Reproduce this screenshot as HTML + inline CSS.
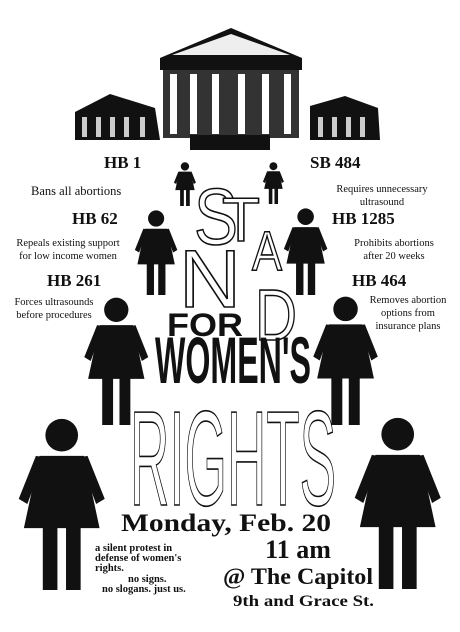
<!DOCTYPE html>
<html><head><meta charset="utf-8"><style>
html,body{margin:0;padding:0;background:#fff}
svg{display:block}
.b{font-family:"Liberation Serif",serif;font-weight:bold;fill:#111}
.d{font-family:"Liberation Serif",serif;fill:#111}
.o{font-family:"Liberation Sans",sans-serif;fill:#fff;stroke:#111;stroke-width:1.6}
.k{font-family:"Liberation Sans",sans-serif;font-weight:bold;fill:#111}
</style></head><body>
<svg width="460" height="632" viewBox="0 0 460 632" xmlns="http://www.w3.org/2000/svg">
<defs>
<g id="w">
<circle cx="26" cy="10" r="9.5" fill="#111"/>
<polygon points="13,22 39,22 48,64 4,64" fill="#111"/>
<polygon points="11,22 16,23 6,50 1,47" fill="#111"/>
<polygon points="41,22 36,23 46,50 51,47" fill="#111"/>
<rect x="15" y="62" width="8.5" height="38" fill="#111"/>
<rect x="28.5" y="62" width="8.5" height="38" fill="#111"/>
</g>
</defs>
<!-- capitol -->
<g fill="#111">
<polygon points="160,58 231,28 302,58"/>
<polygon points="172,55 231,34 290,55" fill="#eee"/>
<rect x="160" y="58" width="142" height="12"/>
<rect x="163" y="70" width="136" height="68" fill="#333"/>
<g fill="#fff"><rect x="170" y="74" width="7" height="60"/><rect x="190" y="74" width="7" height="60"/><rect x="212" y="74" width="7" height="60"/><rect x="238" y="74" width="7" height="60"/><rect x="262" y="74" width="7" height="60"/><rect x="284" y="74" width="7" height="60"/></g>
<rect x="190" y="135" width="80" height="15"/>
<polygon points="75,112 110,94 155,108 160,140 75,140"/>
<g fill="#ccc"><rect x="82" y="117" width="5" height="20"/><rect x="96" y="117" width="5" height="20"/><rect x="110" y="117" width="5" height="20"/><rect x="124" y="117" width="5" height="20"/><rect x="140" y="117" width="5" height="20"/></g>
<polygon points="310,106 345,96 378,108 380,140 310,140"/>
<g fill="#ccc"><rect x="318" y="117" width="5" height="20"/><rect x="332" y="117" width="5" height="20"/><rect x="346" y="117" width="5" height="20"/><rect x="360" y="117" width="5" height="20"/></g>
</g>
<!-- figures -->
<use href="#w" transform="translate(173.5,162) scale(0.44)"/>
<use href="#w" transform="translate(262.5,162) scale(0.42)"/>
<use href="#w" transform="translate(134,210) scale(0.85)"/>
<use href="#w" transform="translate(283,208) scale(0.87)"/>
<use href="#w" transform="translate(83,297) scale(1.28)"/>
<use href="#w" transform="translate(312,296) scale(1.29)"/>
<use href="#w" transform="translate(17,418) scale(1.72)"/>
<use href="#w" transform="translate(353,417) scale(1.72)"/>
<!-- bills -->
<text class="b" x="104" y="168" font-size="17">HB 1</text>
<text class="d" x="31" y="195" font-size="12.5">Bans all abortions</text>
<text class="b" x="310" y="168" font-size="17">SB 484</text>
<text class="d" x="382" y="192" font-size="10.5" text-anchor="middle">Requires unnecessary</text>
<text class="d" x="382" y="205" font-size="10.5" text-anchor="middle">ultrasound</text>
<text class="b" x="72" y="224" font-size="17">HB 62</text>
<text class="d" x="68" y="246" font-size="10.5" text-anchor="middle">Repeals existing support</text>
<text class="d" x="68" y="259" font-size="10.5" text-anchor="middle">for low income women</text>
<text class="b" x="332" y="224" font-size="17">HB 1285</text>
<text class="d" x="394" y="246" font-size="10.5" text-anchor="middle">Prohibits abortions</text>
<text class="d" x="394" y="259" font-size="10.5" text-anchor="middle">after 20 weeks</text>
<text class="b" x="47" y="286" font-size="17">HB 261</text>
<text class="d" x="54" y="305" font-size="10.5" text-anchor="middle">Forces ultrasounds</text>
<text class="d" x="54" y="318" font-size="10.5" text-anchor="middle">before procedures</text>
<text class="b" x="352" y="286" font-size="17">HB 464</text>
<text class="d" x="408" y="303" font-size="10.5" text-anchor="middle">Removes abortion</text>
<text class="d" x="408" y="316" font-size="10.5" text-anchor="middle">options from</text>
<text class="d" x="408" y="329" font-size="10.5" text-anchor="middle">insurance plans</text>
<!-- STAND -->
<text class="o" x="194" y="244" font-size="80" textLength="44" lengthAdjust="spacingAndGlyphs">S</text>
<text class="o" x="222" y="241" font-size="62" textLength="38" lengthAdjust="spacingAndGlyphs">T</text>
<text class="o" x="252" y="270" font-size="56" textLength="30" lengthAdjust="spacingAndGlyphs">A</text>
<text class="o" x="179" y="307" font-size="82" textLength="62" lengthAdjust="spacingAndGlyphs">N</text>
<text class="o" x="255" y="340" font-size="72" textLength="42" lengthAdjust="spacingAndGlyphs">D</text>
<text class="k" x="167" y="336" font-size="32" textLength="76" lengthAdjust="spacingAndGlyphs">FOR</text>
<text class="k" x="155" y="383" font-size="66" textLength="156" lengthAdjust="spacingAndGlyphs">WOMEN'S</text>
<text class="o" x="130" y="505" font-size="135" textLength="206" lengthAdjust="spacingAndGlyphs" style="font-weight:normal">RIGHTS</text>
<!-- bottom -->
<text class="b" x="121" y="531" font-size="25" textLength="210" lengthAdjust="spacingAndGlyphs">Monday, Feb. 20</text>
<g class="b" font-size="10.5">
<text x="95" y="551">a silent protest in</text>
<text x="95" y="561">defense of women's</text>
<text x="95" y="571">rights.</text>
<text x="128" y="582">no signs.</text>
<text x="102" y="592">no slogans. just us.</text>
</g>
<text class="b" x="298" y="558" font-size="26" text-anchor="middle">11 am</text>
<text class="b" x="223" y="584" font-size="23" textLength="150" lengthAdjust="spacingAndGlyphs">@ The Capitol</text>
<text class="b" x="233" y="606" font-size="16" textLength="141" lengthAdjust="spacingAndGlyphs">9th and Grace St.</text>
</svg>
</body></html>
